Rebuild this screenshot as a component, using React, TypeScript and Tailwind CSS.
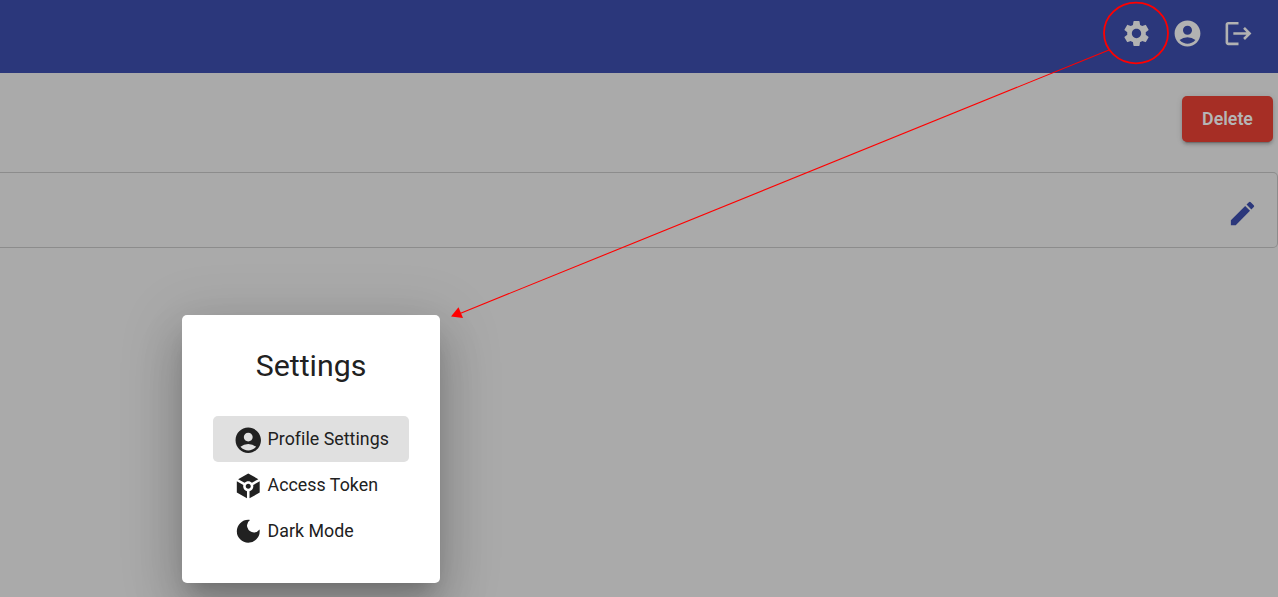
import { MdSettings, MdAccountCircle, MdLogout, MdEdit, MdToken, MdDarkMode } from "react-icons/md";

const items = [
  { label: "Profile Settings", Icon: MdAccountCircle, active: true },
  { label: "Access Token", Icon: MdToken, active: false },
  { label: "Dark Mode", Icon: MdDarkMode, active: false },
];

function Header() {
  return (
    <header className="flex h-[73px] items-start justify-end gap-[20px] bg-[#2b377b] pt-[18px] pr-[24px] text-[#b2b2b2]">
      <MdSettings className="size-[31px]" />
      <MdAccountCircle className="size-[31px]" />
      <MdLogout className="size-[31px]" />
    </header>
  );
}

function SettingsDialog() {
  return (
    <div
      role="dialog"
      className="absolute top-[315px] left-[182px] flex h-[268px] w-[258px] flex-col rounded-[5px] bg-white px-[31px] text-[#212121] shadow-[0_14px_19px_-9px_rgba(0,0,0,0.2),0_30px_48px_4px_rgba(0,0,0,0.14),0_11px_58px_10px_rgba(0,0,0,0.12)]"
    >
      <h1 className="mt-[31px] text-center text-[30.3px] leading-[40px] font-normal">Settings</h1>
      <ul className="mt-[30px] flex flex-col">
        {items.map(({ label, Icon, active }) => (
          <li
            key={label}
            className={`flex h-[45.6px] items-center rounded-[5px] pl-[20px] text-[17.8px] ${active ? "bg-[#e0e0e0]" : ""}`}
          >
            <Icon className="mt-[3px] size-[30.5px]" />
            <span className="mt-[2px] ml-[4px] tracking-[0.04px] whitespace-nowrap">{label}</span>
          </li>
        ))}
      </ul>
    </div>
  );
}

export default function App() {
  return (
    <div className="relative h-[597px] w-[1278px] overflow-hidden bg-[#aaaaaa] font-['Roboto','Liberation_Sans',sans-serif]">
      <Header />
      <div className="flex justify-end pt-[23px] pr-[5px]">
        <button className="h-[46px] w-[91px] rounded-[5px] bg-[#a62e25] pt-px text-[17.8px] font-semibold text-[#b5b5b5] shadow-[0_4px_1px_-3px_rgba(0,0,0,0.2),0_3px_3px_0_rgba(0,0,0,0.14),0_1px_6px_0_rgba(0,0,0,0.12)]">
          Delete
        </button>
      </div>
      <div className="mt-[30px] flex h-[76px] items-center justify-end rounded-r-[5px] border border-l-0 border-[#8c8c8c] pr-[19px] pt-[6px] text-[#2b377b]">
        <MdEdit className="size-[31px]" />
      </div>
      <SettingsDialog />
      <svg className="absolute inset-0" width="1278" height="597" viewBox="0 0 1278 597" fill="none">
        <ellipse cx="1136" cy="33" rx="32" ry="30.3" stroke="#ff0000" strokeWidth="1.8" />
        <path d="M1109 50L460 313.5" stroke="#ff0000" strokeWidth="1.1" />
        <path d="M451 316.5L458.5 307.2L463 318Z" fill="#ff0000" />
      </svg>
    </div>
  );
}
